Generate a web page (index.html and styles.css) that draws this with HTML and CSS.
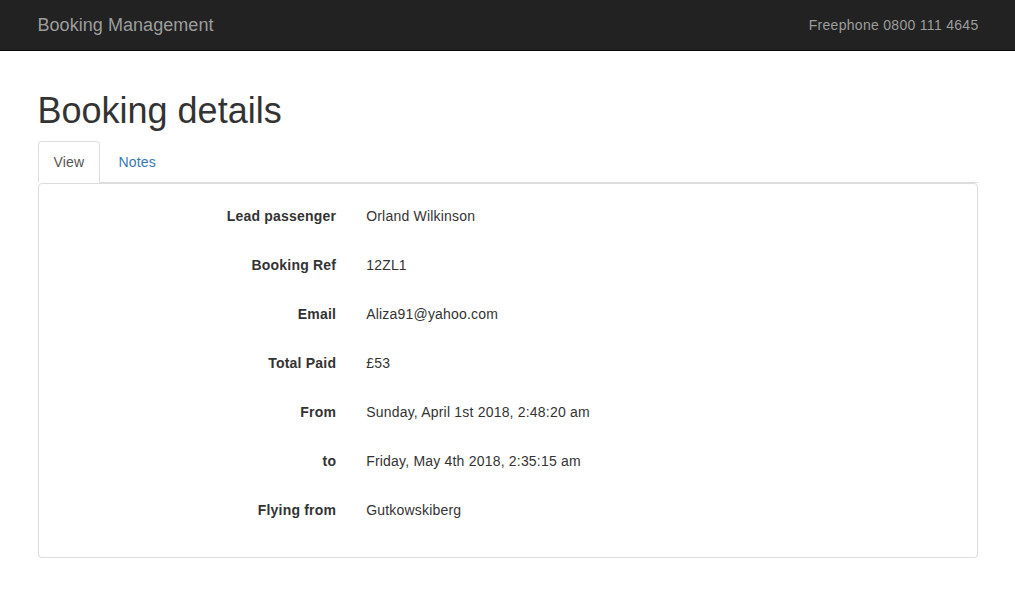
FILE: index.html
```html
<!DOCTYPE html>
<html lang="en">
<head>
<meta charset="utf-8">
<title>Booking Management</title>
<link rel="stylesheet" href="styles.css">
</head>
<body>
<nav class="navbar">
  <div class="container navbar-inner">
    <a class="navbar-brand" href="#">Booking Management</a>
    <p class="navbar-text">Freephone 0800 111 4645</p>
  </div>
</nav>
<main class="container page">
  <h1 class="page-title">Booking details</h1>
  <ul class="nav-tabs">
    <li class="tab active"><a href="#">View</a></li>
    <li class="tab"><a href="#">Notes</a></li>
  </ul>
  <div class="panel">
    <div class="panel-body">
      <div class="form-group"><div class="label">Lead passenger</div><div class="value">Orland Wilkinson</div></div>
      <div class="form-group"><div class="label">Booking Ref</div><div class="value">12ZL1</div></div>
      <div class="form-group"><div class="label">Email</div><div class="value">Aliza91@yahoo.com</div></div>
      <div class="form-group"><div class="label">Total Paid</div><div class="value">£53</div></div>
      <div class="form-group"><div class="label">From</div><div class="value">Sunday, April 1st 2018, 2:48:20 am</div></div>
      <div class="form-group"><div class="label">to</div><div class="value">Friday, May 4th 2018, 2:35:15 am</div></div>
      <div class="form-group"><div class="label">Flying from</div><div class="value">Gutkowskiberg</div></div>
    </div>
  </div>
</main>
</body>
</html>
```
FILE: styles.css
```css
* { box-sizing: border-box; }
html, body { margin: 0; padding: 0; }
body {
  font-family: "Liberation Sans", Arial, Helvetica, sans-serif;
  font-size: 14px;
  line-height: 20px;
  letter-spacing: 0.2px;
  color: #333;
  background: #fff;
}
a { text-decoration: none; }
.container {
  width: 970px;
  margin: 0 auto;
  padding: 0 15px;
}
.navbar {
  background: #222;
  border-bottom: 1px solid #080808;
  height: 51px;
}
.navbar-inner {
  display: flex;
  justify-content: space-between;
  align-items: flex-start;
}
.navbar-brand {
  font-size: 18px;
  line-height: 20px;
  letter-spacing: 0.05px;
  padding: 15px 15px;
  margin-left: -15px;
  height: 50px;
  color: #9d9d9d;
}
.navbar-text {
  margin: 15px -1px 15px 0;
  color: #9d9d9d;
  line-height: 20px;
  letter-spacing: 0.3px;
}
.page { padding-top: 40px; }
.page-title {
  font-size: 36px;
  font-weight: 500;
  line-height: 1.1;
  letter-spacing: 0;
  margin: 0 0 10px;
  color: #333;
}
.nav-tabs {
  list-style: none;
  margin: 0;
  padding: 0;
  display: flex;
  border-bottom: 1px solid #ddd;
}
.tab {
  margin-bottom: -1px;
  margin-right: 2px;
}
.tab a {
  display: block;
  padding: 10px 15px;
  line-height: 20px;
  border: 1px solid transparent;
  border-radius: 4px 4px 0 0;
  color: #337ab7;
}
.tab.active a {
  color: #555;
  background: #fff;
  border-color: #ddd #ddd transparent;
}
.panel {
  border: 1px solid #ddd;
  border-radius: 4px;
  background: #fff;
  box-shadow: 0 1px 1px rgba(0,0,0,.05);
}
.panel-body { padding: 15px 0; }
.form-group {
  display: grid;
  grid-template-columns: 4fr 8fr;
  margin-bottom: 15px;
}
.label {
  padding: 7px 15px 7px;
  text-align: right;
  font-weight: bold;
}
.value {
  padding: 7px 15px;
  min-height: 34px;
}
```
